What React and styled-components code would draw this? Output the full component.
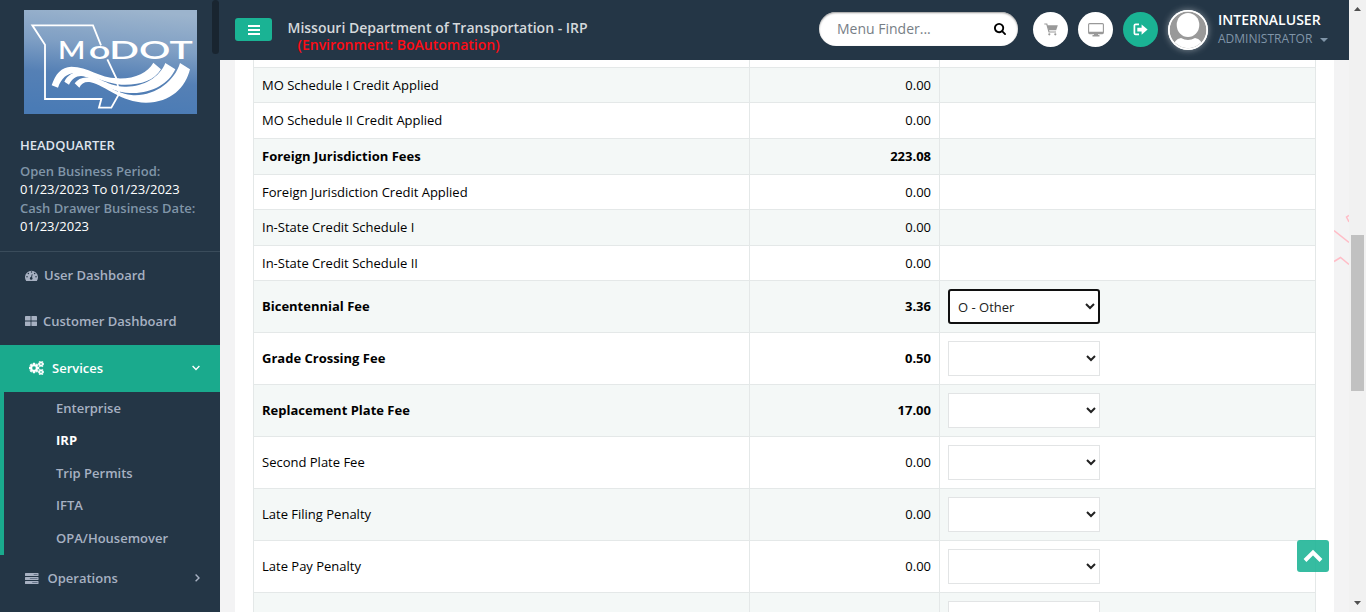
import React from 'react';
import styled, { createGlobalStyle } from 'styled-components';

const GlobalStyle = createGlobalStyle`
  *, *::before, *::after { box-sizing: border-box; }
  html, body { margin: 0; height: 612px; overflow: hidden; }
  body { font-family: "Open Sans", "Noto Sans", sans-serif; font-size: 13px; color: #000; background: #f3f3f4; }
  svg { display: block; flex: none; }
`;

const Page = styled.div`
  position: relative;
  display: flex;
  width: 1366px;
  height: 612px;
  overflow: hidden;
`;

const Sidebar = styled.aside`
  position: relative;
  width: 220px;
  height: 612px;
  flex: none;
  background: #243646;
  overflow: hidden;
`;

const SidebarHandle = styled.span`
  position: absolute;
  top: 0;
  right: 1px;
  width: 7px;
  height: 54px;
  border-radius: 7px;
  background: #192530;
`;

const Profile = styled.div`
  height: 252px;
  padding: 10px 20px 0;
  border-bottom: 1px solid #3a4c5b;
  font-weight: 600;
  line-height: 18px;
`;

const LogoFrame = styled.div`
  padding-left: 4px;
  height: 104px;
`;

const Office = styled.div`
  margin-top: 22px;
  color: #dfe4ed;
`;

const Period = styled.div`
  margin-top: 8px;
  line-height: 18.4px;
`;

const PeriodLabel = styled.div`
  color: #8095a8;
`;

const PeriodValue = styled.div`
  color: #fff;
  font-weight: 500;
`;

const NavItem = styled.div`
  display: flex;
  align-items: center;
  height: ${p => p.$height || 46}px;
  padding: 0 20px ${p => (p.$height ? 2 : 0)}px ${p => p.$indent || 25}px;
  background: ${p => (p.$active ? '#1aaa8d' : 'transparent')};
  color: ${p => (p.$active ? '#fff' : '#a7b1c2')};
  font-weight: 600;
`;

const NavLabel = styled.span`
  flex: 1;
  margin-left: ${p => p.$gap}px;
`;

const SubNav = styled.div`
  height: 163px;
  border-left: 4px solid #1aaa8d;
  display: flex;
  flex-direction: column;
`;

const SubItem = styled.div`
  height: 32.5px;
  padding-left: 52px;
  line-height: 32px;
  font-weight: ${p => (p.$current ? 700 : 600)};
  color: ${p => (p.$current ? '#fff' : '#a7b1c2')};

  &:nth-child(even) {
    line-height: 31px;
  }
`;

const Main = styled.div`
  width: 1129px;
  flex: none;
  display: flex;
  flex-direction: column;
`;

const Header = styled.header`
  display: flex;
  align-items: center;
  height: 60px;
  flex: none;
  padding-left: 15px;
  background: #243646;
`;

const MenuButton = styled.button`
  display: flex;
  align-items: center;
  justify-content: center;
  width: 37px;
  height: 23px;
  margin-bottom: 1px;
  padding: 0;
  border: 0;
  border-radius: 3px;
  background: #1ab394;
  color: #fff;
`;

const Titles = styled.div`
  width: 531.5px;
  margin-left: 15.5px;
  padding-top: 11px;
  font-size: 14px;
  font-weight: 600;
  line-height: 17px;
  color: #d5d9dc;
`;

const Environment = styled.div`
  padding-left: 10px;
  color: #ff0b14;
`;

const Finder = styled.div`
  display: flex;
  align-items: center;
  justify-content: space-between;
  width: 199px;
  height: 34px;
  margin-bottom: 2px;
  padding: 0 12px 1px 18px;
  border-radius: 17px;
  background: #fff;
  box-shadow: inset 0 1px 2px #999;
  color: #777e86;
  font-size: 14px;
`;

const RoundButton = styled.button`
  display: flex;
  align-items: center;
  justify-content: center;
  width: 35px;
  height: 35px;
  margin: 0 0 1px ${p => p.$gap || 10}px;
  padding: 0;
  border: 0;
  border-radius: 50%;
  background: ${p => (p.$accent ? '#1ab394' : '#fff')};
`;

const Avatar = styled.div`
  width: 40px;
  height: 40px;
  margin-left: 10px;
  border-radius: 50%;
  box-shadow: 0 0 7px rgba(255, 255, 255, 0.45);
`;

const User = styled.div`
  margin: 0 0 2px 10px;
  line-height: 19px;
`;

const UserName = styled.div`
  color: #fff;
  font-weight: 600;
  font-size: 14px;
`;

const UserRole = styled.div`
  display: flex;
  align-items: center;
  gap: 8px;
  color: #8095a8;
  font-size: 12px;

  svg {
    margin-top: 3px;
  }
`;

const Content = styled.div`
  display: flex;
  height: 552px;
  background: #f3f3f4;
  overflow: hidden;
`;

const Panel = styled.div`
  width: 1099px;
  margin-left: 15px;
  padding: 0 18px;
  flex: none;
  background: #fff;
`;

const FeeTable = styled.div`
  width: 1063px;
  border: 1px solid #e4e8e8;
  border-width: 0 1px;
`;

const FeeRow = styled.div`
  display: grid;
  grid-template-columns: 495px 190px 376px;
  height: ${p => p.$height}px;
  background: ${p => (p.$shaded ? '#f4f8f7' : '#fff')};
  border-top: ${p => (p.$first ? 0 : 1)}px solid #e4e8e8;
  font-weight: ${p => (p.$bold ? 700 : 400)};
`;

const Cell = styled.div`
  display: flex;
  align-items: center;
  justify-content: ${p => (p.$right ? 'flex-end' : 'flex-start')};
  padding: 0 8px ${p => (p.$raised ? 2 : 0)}px;
  border-left: ${p => (p.$divided ? 1 : 0)}px solid #e4e8e8;
`;

const FeeSelect = styled.select`
  width: 152px;
  height: 35px;
  padding: ${p => (p.$focused ? '1px 0 0 4px' : '1px 0 0 5px')};
  border: ${p => (p.$focused ? '2px solid #101010' : '1px solid #e2e4e5')};
  border-radius: ${p => (p.$focused ? 3 : 0)}px;
  background: #fff;
  color: #222;
  font: 400 13px "Open Sans", sans-serif;
  outline: none;
`;

const ScrollTop = styled.button`
  position: absolute;
  left: 1297px;
  top: 540px;
  width: 32px;
  height: 32px;
  padding: 0;
  display: flex;
  align-items: center;
  justify-content: center;
  border: 0;
  border-radius: 3px;
  background: rgba(26, 179, 148, 0.88);
`;

const Scrollbar = styled.div`
  display: flex;
  flex-direction: column;
  align-items: center;
  justify-content: space-between;
  width: 17px;
  height: 612px;
  padding: 7px 0 7px;
  background: #f1f1f1;
`;

const ScrollThumb = styled.div`
  width: 13px;
  height: 156px;
  margin: 224px 0 auto;
  flex: none;
  background: #c1c1c1;
`;

const fees = [
  { label: '', amount: '', height: 7 },
  { label: 'MO Schedule I Credit Applied', amount: '0.00', height: 35 },
  { label: 'MO Schedule II Credit Applied', amount: '0.00', height: 36 },
  { label: 'Foreign Jurisdiction Fees', amount: '223.08', height: 36, bold: true },
  { label: 'Foreign Jurisdiction Credit Applied', amount: '0.00', height: 35 },
  { label: 'In-State Credit Schedule I', amount: '0.00', height: 36 },
  { label: 'In-State Credit Schedule II', amount: '0.00', height: 35 },
  { label: 'Bicentennial Fee', amount: '3.36', height: 52, bold: true, select: true, reason: 'O - Other' },
  { label: 'Grade Crossing Fee', amount: '0.50', height: 52, bold: true, select: true },
  { label: 'Replacement Plate Fee', amount: '17.00', height: 52, bold: true, select: true },
  { label: 'Second Plate Fee', amount: '0.00', height: 52, select: true },
  { label: 'Late Filing Penalty', amount: '0.00', height: 52, select: true },
  { label: 'Late Pay Penalty', amount: '0.00', height: 52, select: true },
  { label: '', amount: '', height: 52, select: true },
];

const Logo = () => (
  <svg width="173" height="104" viewBox="72 30 519 312">
    <defs>
      <linearGradient id="sky" x1="0.6" y1="0" x2="0.45" y2="1">
        <stop offset="0" stopColor="#9cb4cd" />
        <stop offset="0.35" stopColor="#7f9fc4" />
        <stop offset="0.65" stopColor="#5580b5" />
        <stop offset="1" stopColor="#4a7bb5" />
      </linearGradient>
    </defs>
    <rect x="72" y="30" width="519" height="312" fill="url(#sky)" />
    <path d="M303 136L279 76H97L135 134V297H304L297 323H334L358 280L349 235L322 178" fill="none" stroke="#fff" strokeWidth="5.5" />
    <g fill="#fff" fontFamily="Lato, sans-serif">
      <text x="174" y="177" fontSize="73" textLength="82" lengthAdjust="spacingAndGlyphs">M</text>
      <text x="266" y="178" fontSize="73" textLength="65" lengthAdjust="spacingAndGlyphs">o</text>
      <text x="328" y="177" fontSize="73" textLength="250" lengthAdjust="spacingAndGlyphs">DOT</text>
    </g>
    <g fill="#fff">
      <path d="M155 256C166 222 184 201 214 200C264 200 298 234 352 235C404 237 443 219 460 188L483 208C462 243 420 256 364 254C309 250 271 220 228 219C200 219 184 235 174 263Z" />
      <path d="M193 245C204 223 224 213 246 216C286 223 317 258 374 260C427 262 478 234 496 189L526 208C506 253 450 283 389 279C323 276 280 231 243 228C228 228 215 238 207 254Z" />
      <path d="M224 250C234 236 251 229 271 234C316 249 336 277 394 285C463 291 524 244 540 189L570 208C557 262 513 308 438 308C362 308 316 256 272 247C256 244 244 250 238 263Z" />
    </g>
  </svg>
);

const gear = 'q0 16-149 31-12 27-30 52 51 113 51 138 0 4-4 7-122 71-124 71-8 0-46-47t-52-68q-20 2-30 2t-30-2q-14 21-52 68t-46 47q-2 0-124-71-4-3-4-7 0-25 51-138-18-25-30-52-149-15-149-31v-140q0-16 149-31 13-29 30-52-51-113-51-138 0-4 4-7 4-2 35-20t59-34 30-16q8 0 46 46.5t52 67.5q20-2 30-2t30 2q51-71 92-112l6-2q4 0 124 70 4 3 4 7 0 25-51 138 17 23 30 52 149 15 149 31z';

const CogsIcon = () => (
  <svg width="15" height="14" viewBox="0 0 1920 1792" fill="currentColor" stroke="currentColor" strokeWidth="70">
    <path d={'M896 896q0-106-75-181t-181-75-181 75-75 181 75 181 181 75 181-75 75-181zm768 512q0-52-38-90t-90-38-90 38-38 90q0 53 37.5 90.5t90.5 37.5 90.5-37.5 37.5-90.5zm0-1024q0-52-38-90t-90-38-90 38-38 90q0 53 37.5 90.5t90.5 37.5 90.5-37.5 37.5-90.5zm-384 421v185q0 10-7 19.5t-16 10.5l-155 24q-11 35-32 76 34 48 90 115 7 11 7 20 0 12-7 19-23 30-82.5 89.5t-78.5 59.5q-11 0-21-7l-115-90q-37 19-77 31-11 108-23 155-7 24-30 24h-186q-11 0-20-7.5t-10-17.5l-23-153q-34-10-75-31l-118 89q-7 7-20 7-11 0-21-8-144-133-144-160 0-9 7-19 10-14 41-53t47-61q-23-44-35-82l-152-24q-10-1-17-9.5t-7-19.5v-185q0-10 7-19.5t16-10.5l155-24q11-35 32-76-34-48-90-115-7-11-7-20 0-12 7-20 22-30 82-89t79-59q11 0 21 7l115 90q34-18 77-32 11-108 23-154 7-24 30-24h186q11 0 20 7.5t10 17.5l23 153q34 10 75 31l118-89q8-7 20-7 11 0 21 8 144 133 144 160 0 8-7 19-12 16-42 54t-45 60q23 48 34 82l152 23q10 2 17 10.5t7 19.5zM1920 1338v140' + gear + 'M1920 314v140' + gear} />
  </svg>
);

const GaugeIcon = () => (
  <svg width="13" height="11" viewBox="0 0 13 11">
    <path d="M1.2 11A6.5 6.5 0 1 1 11.8 11Z" fill="#a7b1c2" />
    <g fill="#243646">
      <circle cx="2" cy="6.8" r="0.75" /><circle cx="3.4" cy="3.4" r="0.75" /><circle cx="6.5" cy="2" r="0.75" />
      <circle cx="9.6" cy="3.4" r="0.75" /><circle cx="11" cy="6.8" r="0.75" /><circle cx="6.2" cy="8.4" r="1.3" />
    </g>
    <path d="M6.2 8.4L7.2 4.3" stroke="#243646" strokeWidth="0.9" />
  </svg>
);

const TilesIcon = () => (
  <svg width="12" height="10" viewBox="0 0 12 10" fill="#a7b1c2">
    <rect width="5.6" height="4.6" rx="0.4" /><rect x="6.4" width="5.6" height="4.6" rx="0.4" />
    <rect y="5.4" width="5.6" height="4.6" rx="0.4" /><rect x="6.4" y="5.4" width="5.6" height="4.6" rx="0.4" />
  </svg>
);

const TasksIcon = () => (
  <svg width="13.5" height="11" viewBox="0 0 14 11" preserveAspectRatio="none">
    <g fill="#a7b1c2"><rect width="14" height="3" rx="0.5" /><rect y="4" width="14" height="3" rx="0.5" /><rect y="8" width="14" height="3" rx="0.5" /></g>
    <g fill="#66758a"><rect x="9" y="1" width="4" height="1" /><rect x="5" y="5" width="8" height="1" /><rect x="7.5" y="9" width="5.5" height="1" /></g>
  </svg>
);

const Chevron = ({ down }) => (
  <svg width="8" height="8" viewBox="0 0 8 8" fill="none" stroke="currentColor" strokeWidth="1.4">
    <path d={down ? 'M0.6 2L4 5.4L7.4 2' : 'M3.6 0.5L7 3.9L3.6 7.3'} />
  </svg>
);

const SearchIcon = () => (
  <svg width="12" height="12" viewBox="64 128 1664 1664" fill="#000">
    <path d="M1216 832q0-185-131.5-316.5t-316.5-131.5-316.5 131.5-131.5 316.5 131.5 316.5 316.5 131.5 316.5-131.5 131.5-316.5zm512 832q0 52-38 90t-90 38q-54 0-90-38l-343-342q-179 124-399 124-143 0-273.5-55.5t-225-150-150-225-55.5-273.5 55.5-273.5 150-225 225-150 273.5-55.5 273.5 55.5 225 150 150 225 55.5 273.5q0 220-124 399l343 343q37 37 37 90z" />
  </svg>
);

const CartIcon = () => (
  <svg width="14" height="13" viewBox="0 0 14 13">
    <path d="M0.3 1H2.8L5 9H12" fill="none" stroke="#999" strokeWidth="1.2" />
    <path d="M3.3 2.2H13.8L12.2 7.2H4.7Z" fill="#999" />
    <circle cx="5.3" cy="11.3" r="1.1" fill="#999" /><circle cx="11.3" cy="11.3" r="1.1" fill="#999" />
  </svg>
);

const MonitorIcon = () => (
  <svg width="16" height="14" viewBox="0 0 16 14">
    <rect x="0.6" y="0.6" width="14.8" height="10" rx="1" fill="none" stroke="#999" strokeWidth="1.1" />
    <path d="M1 8.8H15V10.5H1ZM6 10.5H10V12H11.5V13.5H4.5V12H6Z" fill="#999" />
  </svg>
);

const SignOutIcon = () => (
  <svg width="15" height="13" viewBox="0 0 15 13">
    <path d="M6 1.4H2.6Q1.4 1.4 1.4 2.6V10.2Q1.4 11.4 2.6 11.4H6" fill="none" stroke="#fff" strokeWidth="1.7" />
    <path d="M4.3 4.7H8.6V1.5L14.6 6.6L8.6 11.7V8.6H4.3Z" fill="#fff" />
  </svg>
);

const AvatarIcon = () => (
  <svg width="40" height="40" viewBox="0 0 40 40">
    <defs><clipPath id="face"><circle cx="20" cy="20" r="18.2" /></clipPath></defs>
    <circle cx="20" cy="20" r="20" fill="#fff" />
    <circle cx="20" cy="20" r="18.4" fill="#999" />
    <g clipPath="url(#face)" fill="#fff">
      <ellipse cx="20" cy="15" rx="11.3" ry="12" />
      <path d="M4 39Q6 29 13 28Q20 32 27 28Q34 29 36 39Z" />
    </g>
    <circle cx="20" cy="20" r="19.2" fill="none" stroke="#fff" strokeWidth="1.5" />
  </svg>
);

const subItems = ['Enterprise', 'IRP', 'Trip Permits', 'IFTA', 'OPA/Housemover'];

export default function App() {
  return (
    <Page>
      <GlobalStyle />
      <Sidebar>
        <Profile>
          <LogoFrame><Logo /></LogoFrame>
          <Office>HEADQUARTER</Office>
          <Period>
            <PeriodLabel>Open Business Period:</PeriodLabel>
            <PeriodValue>01/23/2023 To 01/23/2023</PeriodValue>
            <PeriodLabel>Cash Drawer Business Date:</PeriodLabel>
            <PeriodValue>01/23/2023</PeriodValue>
          </Period>
        </Profile>
        <NavItem><GaugeIcon /><NavLabel $gap={6}>User Dashboard</NavLabel></NavItem>
        <NavItem $height={47}><TilesIcon /><NavLabel $gap={6}>Customer Dashboard</NavLabel></NavItem>
        <NavItem $height={47} $indent={29} $active>
          <CogsIcon /><NavLabel $gap={8}>Services</NavLabel><Chevron down />
        </NavItem>
        <SubNav>
          {subItems.map(item => <SubItem key={item} $current={item === 'IRP'}>{item}</SubItem>)}
        </SubNav>
        <NavItem><TasksIcon /><NavLabel $gap={9}>Operations</NavLabel><Chevron /></NavItem>
        <SidebarHandle />
      </Sidebar>
      <Main>
        <Header>
          <MenuButton>
            <svg width="12" height="10" viewBox="0 0 12 10" fill="#fff"><path d="M0 0H12V2H0ZM0 4H12V6H0ZM0 8H12V10H0Z" /></svg>
          </MenuButton>
          <Titles>
            <div>Missouri Department of Transportation - IRP</div>
            <Environment>(Environment: BoAutomation)</Environment>
          </Titles>
          <Finder><span>Menu Finder...</span><SearchIcon /></Finder>
          <RoundButton $gap={15}><CartIcon /></RoundButton>
          <RoundButton><MonitorIcon /></RoundButton>
          <RoundButton $accent><SignOutIcon /></RoundButton>
          <Avatar><AvatarIcon /></Avatar>
          <User>
            <UserName>INTERNALUSER</UserName>
            <UserRole>
              ADMINISTRATOR
              <svg width="8" height="4" viewBox="0 0 8 4" fill="#8095a8"><path d="M0 0H8L4 4Z" /></svg>
            </UserRole>
          </User>
        </Header>
        <Content>
          <Panel>
            <FeeTable>
              {fees.map((fee, i) => (
                <FeeRow key={i} $first={i === 0} $height={fee.height} $shaded={i % 2 === 1} $bold={fee.bold}>
                  <Cell $raised={fee.height % 2 === 0}>{fee.label}</Cell>
                  <Cell $raised={fee.height % 2 === 0} $right $divided>{fee.amount}</Cell>
                  <Cell $divided>
                    {fee.select && (
                      <FeeSelect $focused={!!fee.reason}>
                        <option>{fee.reason || ''}</option>
                      </FeeSelect>
                    )}
                  </Cell>
                </FeeRow>
              ))}
            </FeeTable>
          </Panel>
          <svg width="15" height="552" viewBox="0 60 15 552" fill="none" stroke="#ffbdc7" strokeWidth="1.5">
            <path d="M0 230.5L15 242.5M0 261.5L6.5 257.5L15 264.5M15 215.5L12.5 217L15 222" />
          </svg>
        </Content>
      </Main>
      <Scrollbar>
        <svg width="7" height="4" viewBox="0 0 7 4" fill="#505050"><path d="M0 4L3.5 0L7 4Z" /></svg>
        <ScrollThumb />
        <svg width="7" height="4" viewBox="0 0 7 4" fill="#505050"><path d="M0 0L3.5 4L7 0Z" /></svg>
      </Scrollbar>
      <ScrollTop>
        <svg width="20" height="14" viewBox="0 0 20 14" fill="none" stroke="#fff" strokeWidth="4"><path d="M2 11.5L10 3.5L18 11.5" /></svg>
      </ScrollTop>
    </Page>
  );
}
